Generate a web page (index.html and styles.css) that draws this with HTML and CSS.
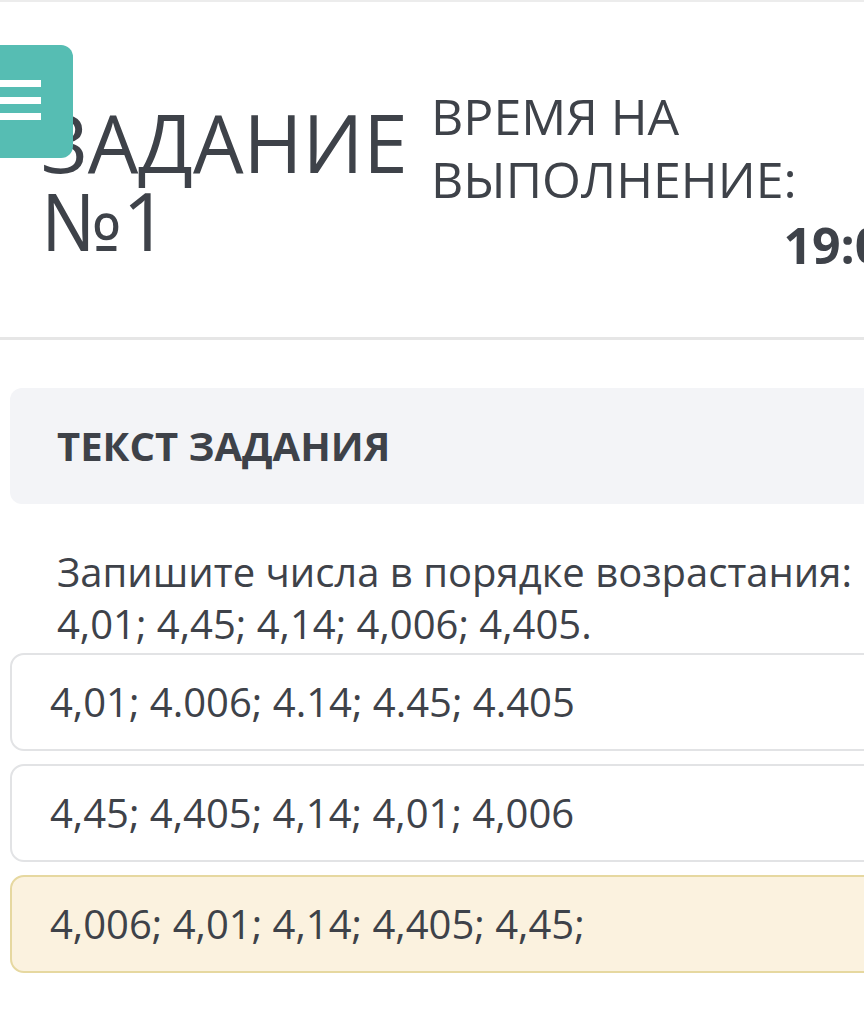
FILE: index.html
```html
<!DOCTYPE html>
<html lang="ru">
<head>
<meta charset="utf-8">
<title>Задание №1</title>
<link rel="stylesheet" href="styles.css">
</head>
<body>
<div class="page">
  <header class="header">
    <h1 class="title">ЗАДАНИЕ №1</h1>
    <div class="time">
      <div class="time-label">ВРЕМЯ НА ВЫПОЛНЕНИЕ:</div>
      <div class="timer">19:00</div>
    </div>
    <button class="menu-btn" aria-label="Меню">
      <span class="bar"></span>
      <span class="bar"></span>
      <span class="bar"></span>
    </button>
  </header>
  <main class="content">
    <div class="task-head">ТЕКСТ ЗАДАНИЯ</div>
    <p class="question">Запишите числа в порядке возрастания:<br>4,01; 4,45; 4,14; 4,006; 4,405.</p>
    <div class="options">
      <div class="option">4,01; 4.006; 4.14; 4.45; 4.405</div>
      <div class="option">4,45; 4,405; 4,14; 4,01; 4,006</div>
      <div class="option selected">4,006; 4,01; 4,14; 4,405; 4,45;</div>
    </div>
  </main>
</div>
</body>
</html>
```

FILE: styles.css
```css
html, body {
  margin: 0;
  padding: 0;
  overflow: hidden;
  background: #ffffff;
}

body {
  font-family: "Open Sans", "Noto Sans", sans-serif;
  color: #3e4249;
}

.page {
  width: 940px;
  border-top: 2px solid #ececec;
}

.header {
  position: relative;
  display: grid;
  grid-template-columns: 390px 481px;
  align-items: center;
  padding: 83px 0 60px 41px;
  border-bottom: 3px solid #e6e6e6;
}

.title {
  margin: 0;
  font-size: 80px;
  line-height: 78px;
  font-weight: 400;
}

.time-label {
  font-size: 50px;
  line-height: 63px;
}

.timer {
  margin-top: 3px;
  font-size: 50px;
  line-height: 63px;
  font-weight: 700;
  text-align: right;
}

.menu-btn {
  position: absolute;
  left: 0;
  top: 43px;
  width: 73px;
  height: 113px;
  margin: 0;
  padding: 35px 0 0 0;
  border: none;
  border-radius: 0 12px 12px 0;
  background: #56bdb3;
  display: flex;
  flex-direction: column;
  align-items: flex-start;
  gap: 9.5px;
}

.bar {
  display: block;
  width: 41px;
  height: 7px;
  background: #ffffff;
}

.content {
  padding: 48px 0 0 10px;
}

.task-head {
  background: #f3f4f7;
  border-radius: 12px 0 0 12px;
  padding: 32px 47px;
  font-size: 40px;
  line-height: 52px;
  font-weight: 700;
}

.question {
  margin: 0;
  padding: 42px 0 0 47px;
  font-size: 40px;
  line-height: 52px;
}

.options {
  margin-top: 3px;
  display: flex;
  flex-direction: column;
  gap: 13px;
}

.option {
  border: 2px solid #e2e3e5;
  border-radius: 14px 0 0 14px;
  padding: 21px 38px;
  font-size: 40px;
  line-height: 52px;
  background: #ffffff;
}

.option.selected {
  background: #fbf2df;
  border-color: #e6d8a0;
}
```
